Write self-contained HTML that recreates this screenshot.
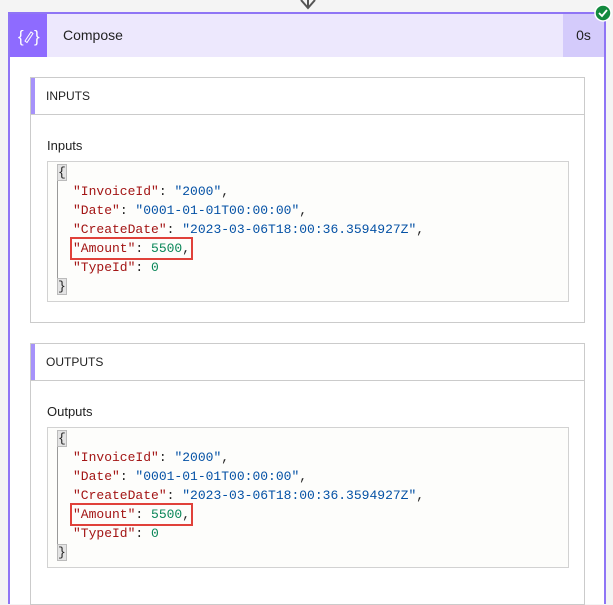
<!DOCTYPE html>
<html><head><style>
body{margin:0;width:613px;height:588px;overflow:hidden;background:#f4f4f4;font-family:"Liberation Sans",sans-serif;position:relative}
.card{position:absolute;left:8px;top:12px;width:594px;height:590px;border:2px solid #8f75f5;border-bottom:none;background:#fff}
.hdr{position:absolute;left:0;top:0;width:594px;height:43px;background:#ede8fd}
.ic{position:absolute;left:0;top:0;width:37px;height:43px;background:#8e6bff}
.tt{position:absolute;left:53px;top:13px;font-size:14px;color:#222}
.tm{position:absolute;right:0;top:0;width:41px;height:43px;background:#d4cbfb;font-size:14px;color:#222;text-align:center;line-height:43px}
.sec{position:absolute;left:20px;width:553px;border:1px solid #cbcbcb;background:#fff}
.sh{height:36px;border-bottom:1px solid #cbcbcb;position:relative}
.sh:before{content:"";position:absolute;left:0;top:0;width:4px;height:36px;background:#a692fa}
.sh span{position:absolute;left:15px;top:11px;font-size:12px;color:#222}
.lab{position:absolute;left:16px;font-size:13px;color:#222}
.code{position:absolute;left:16px;width:520px;height:139px;border:1px solid #d2d2d2;background:#fdfdfb;font-family:"Liberation Mono",monospace;font-size:13px}
.code:before{content:"";position:absolute;left:9px;top:16px;width:1px;height:110px;background:#999}
.ln{position:absolute;left:25px;white-space:pre;line-height:19px}
.k{color:#a31515}.s{color:#0451a5}.n{color:#098658}.p{color:#222}
.br{position:absolute;left:10px;color:#222;background:#e4e4e4;outline:1px solid #bbb;line-height:15px;width:8px}
.red{position:absolute;left:22px;width:119px;height:19px;border:2px solid #e0413a}
</style></head><body>
<svg style="position:absolute;left:297px;top:0" width="22" height="10"><path d="M4 0 L11 8 L18 0 M11 0 V8" stroke="#555" stroke-width="2" fill="none"/></svg>
<div class="card">
<div class="hdr">
<div class="ic"><svg width="37" height="43"><text x="8" y="28" fill="#fff" font-size="17" font-family="Liberation Sans">{</text><text x="24" y="28" fill="#fff" font-size="17" font-family="Liberation Sans">}</text><path d="M15 27 L21 18 L23 19.5 L17 28.5 Z" stroke="#fff" fill="none" stroke-width="1"/></svg></div>
<div class="tt">Compose</div>
<div class="tm">0s</div>
</div>
<div class="sec" style="top:63px;height:244px"><div class="sh"><span>INPUTS</span></div>
<div class="lab" style="top:60px">Inputs</div>
<div class="code" style="top:83px">
<div class="br" style="top:3px">{</div>
<div class="ln" style="top:20px"><span class="k">"InvoiceId"</span><span class="p">: </span><span class="s">"2000"</span><span class="p">,</span></div>
<div class="ln" style="top:39px"><span class="k">"Date"</span><span class="p">: </span><span class="s">"0001-01-01T00:00:00"</span><span class="p">,</span></div>
<div class="ln" style="top:58px"><span class="k">"CreateDate"</span><span class="p">: </span><span class="s">"2023-03-06T18:00:36.3594927Z"</span><span class="p">,</span></div>
<div class="ln" style="top:77px"><span class="k">"Amount"</span><span class="p">: </span><span class="n">5500</span><span class="p">,</span></div>
<div class="red" style="top:75px"></div>
<div class="ln" style="top:96px"><span class="k">"TypeId"</span><span class="p">: </span><span class="n">0</span></div>
<div class="br" style="top:117px">}</div>
</div></div>
<div class="sec" style="top:329px;height:260px"><div class="sh"><span>OUTPUTS</span></div>
<div class="lab" style="top:60px">Outputs</div>
<div class="code" style="top:83px">
<div class="br" style="top:3px">{</div>
<div class="ln" style="top:20px"><span class="k">"InvoiceId"</span><span class="p">: </span><span class="s">"2000"</span><span class="p">,</span></div>
<div class="ln" style="top:39px"><span class="k">"Date"</span><span class="p">: </span><span class="s">"0001-01-01T00:00:00"</span><span class="p">,</span></div>
<div class="ln" style="top:58px"><span class="k">"CreateDate"</span><span class="p">: </span><span class="s">"2023-03-06T18:00:36.3594927Z"</span><span class="p">,</span></div>
<div class="ln" style="top:77px"><span class="k">"Amount"</span><span class="p">: </span><span class="n">5500</span><span class="p">,</span></div>
<div class="red" style="top:75px"></div>
<div class="ln" style="top:96px"><span class="k">"TypeId"</span><span class="p">: </span><span class="n">0</span></div>
<div class="br" style="top:117px">}</div>
</div></div>
</div>
<svg style="position:absolute;left:594px;top:4px" width="18" height="18"><circle cx="9" cy="9" r="8" fill="#128a3e" stroke="#fff" stroke-width="1.5"/><path d="M5 9 L8 12 L13 6" stroke="#fff" stroke-width="1.8" fill="none"/></svg>
</body></html>
